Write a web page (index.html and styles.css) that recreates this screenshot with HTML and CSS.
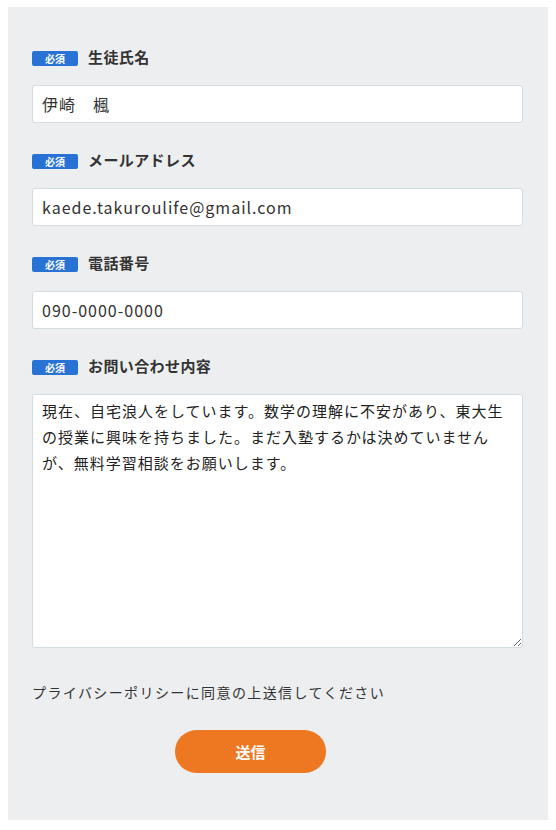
FILE: index.html
```html
<!DOCTYPE html>
<html lang="ja">
<head>
    <meta charset="UTF-8">
    <title>お問い合わせ</title>
    <link rel="stylesheet" href="styles.css">
</head>
<body>
    <form class="panel">
        <div class="field">
            <div class="label"><span class="req">必須</span><span class="name">生徒氏名</span></div>
            <input class="input" type="text" value="伊崎　楓">
        </div>
        <div class="field">
            <div class="label"><span class="req">必須</span><span class="name">メールアドレス</span></div>
            <input class="input" type="email" value="kaede.takuroulife@gmail.com">
        </div>
        <div class="field">
            <div class="label"><span class="req">必須</span><span class="name">電話番号</span></div>
            <input class="input" type="tel" value="090-0000-0000">
        </div>
        <div class="field">
            <div class="label"><span class="req">必須</span><span class="name">お問い合わせ内容</span></div>
            <textarea class="textarea">現在、自宅浪人をしています。数学の理解に不安があり、東大生の授業に興味を持ちました。まだ入塾するかは決めていませんが、無料学習相談をお願いします。</textarea>
        </div>
        <p class="privacy">プライバシーポリシーに同意の上送信してください</p>
        <button class="submit" type="button">送信</button>
    </form>
</body>
</html>
```

FILE: styles.css
```css
body { margin: 0; background: #fff; font-family: "Noto Sans CJK JP", "Noto Sans", sans-serif; color: #333; }
.panel { display: block; margin: 7px 8px 0; width: 540px; box-sizing: border-box; padding: 44px 24px 47px; background: #eceef0; }
.field { margin-bottom: 31px; }
.label { display: flex; align-items: center; gap: 10px; height: 15px; margin-bottom: 19px; font-size: 15px; font-weight: bold; letter-spacing: 0.4px; }
.name { margin-top: -5px; }
.req { display: inline-flex; align-items: center; justify-content: center; width: 46px; height: 15px; border-radius: 2px; background: #2872d6; color: #fff; font-size: 10px; letter-spacing: 0; }
.input { display: block; width: 491px; height: 38px; box-sizing: border-box; margin: 0; padding: 0 9px; border: 1px solid #d3dce1; border-radius: 3px; background: #fff; font-family: "Noto Sans CJK JP", "Noto Sans", sans-serif; font-size: 16px; letter-spacing: 1px; color: #333; outline: none; }
.textarea { display: block; width: 491px; height: 254px; box-sizing: border-box; margin: 0; padding: 3px 9px; border: 1px solid #d3dce1; border-radius: 3px; background: #fff; font-family: "Noto Sans CJK JP", "Noto Sans", sans-serif; font-size: 15px; line-height: 26px; letter-spacing: 1px; color: #222; }
.privacy { margin: 34px 0 28px; font-size: 14px; line-height: 20px; letter-spacing: 1.4px; color: #333; }
.submit { display: block; margin-left: 143px; width: 151px; height: 43px; border: none; border-radius: 22px; background: #ee7721; color: #fff; font-family: "Noto Sans CJK JP", sans-serif; font-size: 15px; font-weight: bold; }
```
